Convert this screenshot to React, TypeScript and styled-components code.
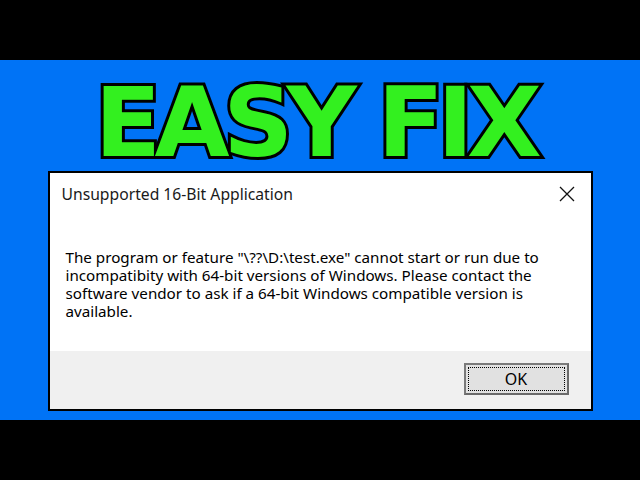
import React from "react";
import styled, { createGlobalStyle } from "styled-components";

const Global = createGlobalStyle`
  html, body { margin: 0; padding: 0; background: #000; }
  body { width: 640px; height: 480px; overflow: hidden; font-family: "Noto Sans", "Open Sans", sans-serif; }
`;

const Page = styled.div`
  width: 640px;
  height: 480px;
  display: flex;
  flex-direction: column;
  background: #000;
`;

const Letterbox = styled.div`
  height: 60px;
  background: #000;
`;

const Stage = styled.div`
  height: 360px;
  background: #0073f6;
  display: flex;
  flex-direction: column;
  align-items: center;
`;

const Headline = styled.h1`
  margin: 15px 0 0 -10px;
  height: 96px;
  font-family: "DejaVu Sans", Verdana, sans-serif;
  font-weight: 700;
  font-size: 97px;
  line-height: 96px;
  letter-spacing: -6.5px;
  color: #33f01f;
  -webkit-text-stroke: 6px #000;
  paint-order: stroke fill;
  white-space: nowrap;
`;

const Dialog = styled.div`
  width: 541px;
  height: 236px;
  border: 2px solid #000;
  background: #fff;
  display: flex;
  flex-direction: column;
`;

const TitleBar = styled.div`
  display: flex;
  justify-content: space-between;
  align-items: center;
  padding: 10px 14px 0 12px;
  height: 32px;
  box-sizing: border-box;
`;

const Title = styled.span`
  font-size: 15.7px;
  color: #1a1a1a;
`;

const Close = styled.span`
  display: flex;
  width: 20px;
  height: 20px;
  align-items: center;
  justify-content: center;
`;

const Body = styled.div`
  flex: 1;
  padding: 43px 10px 0 16px;
  font-size: 15.2px;
  line-height: 18px;
  color: #000;
  white-space: nowrap;
`;

const Footer = styled.div`
  height: 58px;
  background: #f0f0f0;
  display: flex;
  justify-content: flex-end;
  align-items: flex-start;
  padding: 12px 22px 0 0;
  box-sizing: border-box;
`;

const OkButton = styled.button`
  width: 105px;
  height: 32px;
  box-sizing: border-box;
  background: #e1e1e1;
  border: 2px solid #7a7a7a;
  border-right-color: #6a6a6a;
  border-bottom-color: #6a6a6a;
  padding: 2px;
  display: flex;
  font-family: "Noto Sans", "Open Sans", sans-serif;
`;

const Focus = styled.span`
  flex: 1;
  border: 1px dotted #000;
  display: flex;
  align-items: center;
  justify-content: center;
  font-size: 16px;
  color: #000;
`;

const lines = [
  'The program or feature "\\??\\D:\\test.exe" cannot start or run due to',
  "incompatibity with 64-bit versions of Windows. Please contact the",
  "software vendor to ask if a 64-bit Windows compatible version is",
  "available.",
];

export default function App() {
  return (
    <Page>
      <Global />
      <Letterbox />
      <Stage>
        <Headline>EASY FIX</Headline>
        <Dialog>
          <TitleBar>
            <Title>Unsupported 16-Bit Application</Title>
            <Close>
              <svg width="16" height="16" viewBox="0 0 16 16">
                <path d="M1 1 L15 15 M15 1 L1 15" stroke="#111" strokeWidth="1.3" />
              </svg>
            </Close>
          </TitleBar>
          <Body>
            {lines.map((l, i) => (
              <div key={i}>{l}</div>
            ))}
          </Body>
          <Footer>
            <OkButton>
              <Focus>OK</Focus>
            </OkButton>
          </Footer>
        </Dialog>
      </Stage>
      <Letterbox />
    </Page>
  );
}
